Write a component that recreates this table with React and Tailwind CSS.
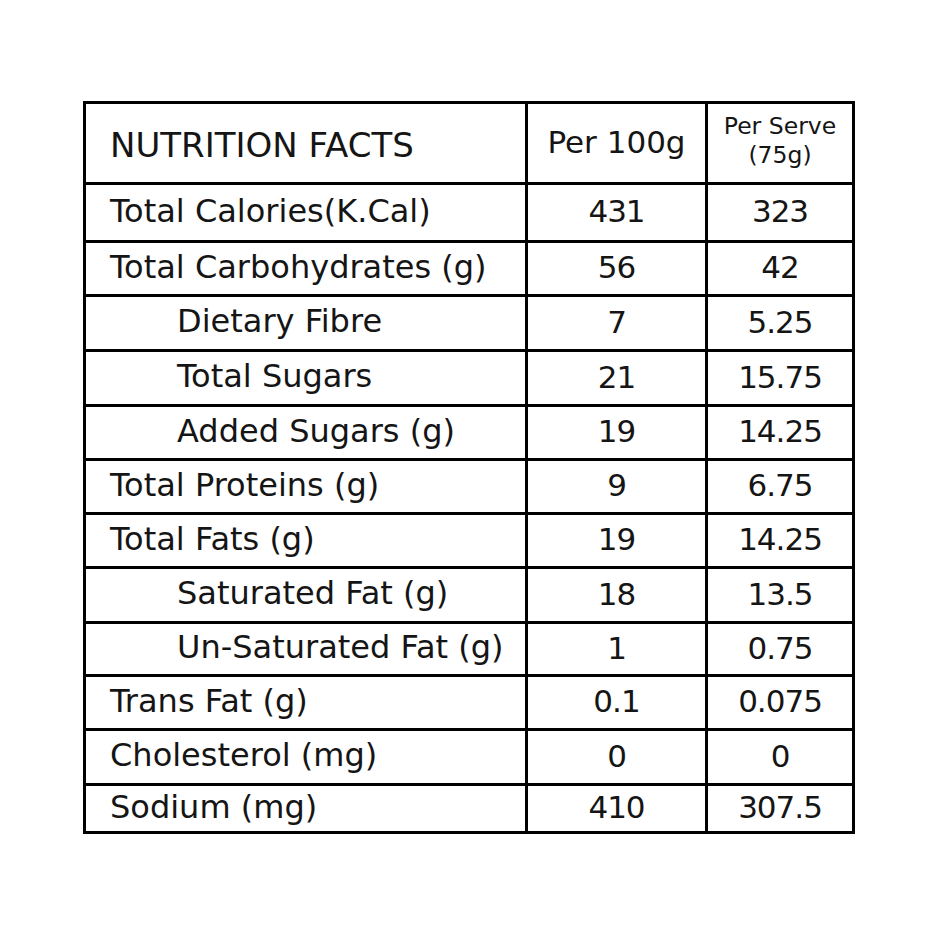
import React from 'react';

const ROWS = [
  { label: 'Total Calories(K.Cal)', a: '431', b: '323', h: 'h-[58px]' },
  { label: 'Total Carbohydrates (g)', a: '56', b: '42', h: 'h-[54px]' },
  { label: 'Dietary Fibre', a: '7', b: '5.25', h: 'h-[55px]', indent: true },
  { label: 'Total Sugars', a: '21', b: '15.75', h: 'h-[55px]', indent: true },
  { label: 'Added Sugars (g)', a: '19', b: '14.25', h: 'h-[54px]', indent: true },
  { label: 'Total Proteins (g)', a: '9', b: '6.75', h: 'h-[54px]' },
  { label: 'Total Fats (g)', a: '19', b: '14.25', h: 'h-[54px]' },
  { label: 'Saturated Fat (g)', a: '18', b: '13.5', h: 'h-[55px]', indent: true },
  { label: 'Un-Saturated Fat (g)', a: '1', b: '0.75', h: 'h-[53px]', indent: true },
  { label: 'Trans Fat (g)', a: '0.1', b: '0.075', h: 'h-[54px]' },
  { label: 'Cholesterol (mg)', a: '0', b: '0', h: 'h-[55px]' },
  { label: 'Sodium (mg)', a: '410', b: '307.5', h: 'h-[48px]' },
];

export default function App() {
  return (
    <div className="min-h-screen w-[940px] bg-white pt-[101px] pl-[83px] text-[#151515] font-['DejaVu_Sans',sans-serif]">
      <div className="w-[772px] border-l-[3px] border-t-[3px] border-black">
        {/* header */}
        <div className="grid grid-cols-[442px_180px_147px] h-[81px]">
          <div className="border-r-[3px] border-b-[3px] border-black flex items-center pl-[24px] pt-[4px] text-[34px] leading-none">
            NUTRITION FACTS
          </div>
          <div className="border-r-[3px] border-b-[3px] border-black flex items-center justify-center pb-[2px] text-[31px] leading-none">
            Per 100g
          </div>
          <div className="border-r-[3px] border-b-[3px] border-black flex flex-col items-center justify-center pb-[4px] text-[23.5px] leading-[29px]">
            <span>Per Serve</span>
            <span>(75g)</span>
          </div>
        </div>

        {ROWS.map((r, i) => (
          <div key={i} className={`grid grid-cols-[442px_180px_147px] ${r.h}`}>
            <div className={`border-r-[3px] border-b-[3px] border-black flex items-center pb-[4px] text-[32px] leading-none ${r.indent ? 'pl-[91px]' : 'pl-[24px]'}`}>
              {r.label}
            </div>
            <div className="border-r-[3px] border-b-[3px] border-black flex items-center justify-center pb-[2px] text-[31px] tracking-[-1px] leading-none">
              {r.a}
            </div>
            <div className="border-r-[3px] border-b-[3px] border-black flex items-center justify-center pb-[2px] text-[31px] tracking-[-1px] leading-none">
              {r.b}
            </div>
          </div>
        ))}
      </div>
    </div>
  );
}
